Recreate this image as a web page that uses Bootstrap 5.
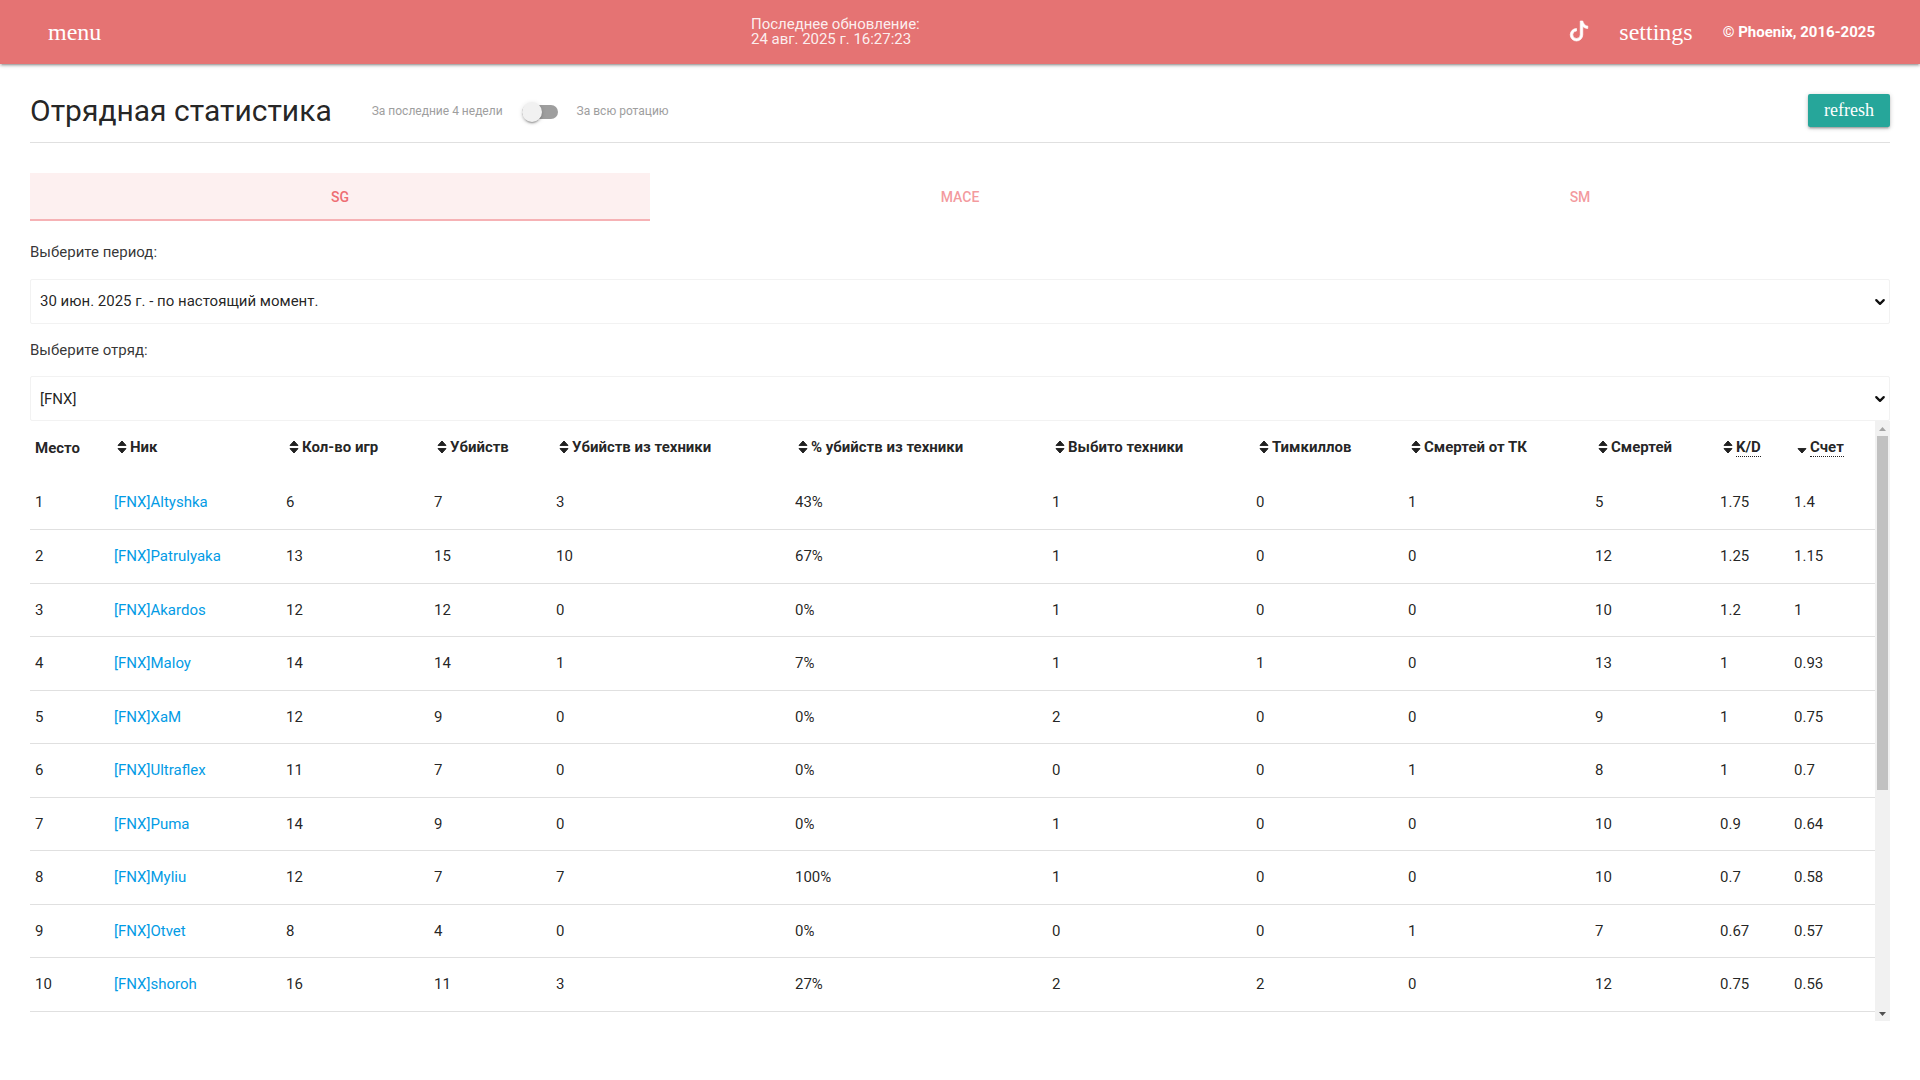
<!DOCTYPE html>
<html lang="ru">
<head>
<meta charset="utf-8">
<title>Отрядная статистика</title>
<link href="https://cdn.jsdelivr.net/npm/bootstrap@5.3.0/dist/css/bootstrap.min.css" rel="stylesheet">
<style>
html,body{height:100%;}
body{font-family:Roboto,"Liberation Sans",sans-serif;font-size:15px;line-height:1.5;color:rgba(0,0,0,.87);background:#fff;overflow:hidden;}
.top-bar{background:#e57373;height:64px;padding:0 45px 0 48px;color:#fff;box-shadow:0 2px 2px 0 rgba(0,0,0,.14),0 3px 1px -2px rgba(0,0,0,.12),0 1px 5px 0 rgba(0,0,0,.2);}
.ico-word{font-family:"Liberation Serif",serif;font-size:24px;line-height:24px;color:#fff;}
.menu-word{position:relative;top:1px;}
.bar-left{flex:0 0 703px;}
.updated{font-size:15px;line-height:15px;color:rgba(255,255,255,.9);margin-top:-1px;letter-spacing:-.02px;}
.bar-right{margin-left:auto;}
.tiktok-ico{width:20px;height:20px;margin-right:30px;margin-top:-2px;display:block;fill:#fff;stroke:#fff;stroke-width:.55;overflow:visible;}
.copy-text{font-size:15px;font-weight:700;color:#fff;margin-left:30px;}
.main-area{padding:0 30px;}
.head-row{height:79px;border-bottom:1px solid #e0e0e0;padding-bottom:5px;}
.head-title{font-size:30px;line-height:36px;font-weight:400;margin:0 40px 0 0;}
.switch-text{font-size:12px;color:#9e9e9e;}
.lever{width:36px;height:14px;background:rgba(0,0,0,.38);border-radius:15px;margin:1px 19px 0 19px;display:flex;align-items:center;}
.lever-knob{width:20px;height:20px;border-radius:50%;background:#f1f1f1;box-shadow:0 3px 1px -2px rgba(0,0,0,.2),0 2px 2px 0 rgba(0,0,0,.14),0 1px 5px 0 rgba(0,0,0,.12);flex:none;}
.refresh-btn{margin-left:auto;background:#26a69a;color:#fff;border:0;border-radius:2px;height:33px;padding:0 16px;font-family:"Liberation Serif",serif;font-size:18px;line-height:33px;box-shadow:0 2px 2px 0 rgba(0,0,0,.14),0 3px 1px -2px rgba(0,0,0,.12),0 1px 5px 0 rgba(0,0,0,.2);margin-top:-1px;}
.tab-row{margin-top:30px;height:48px;}
.tab-item{flex:1 1 0;text-align:center;line-height:48px;font-size:14px;font-weight:500;color:rgba(238,110,115,.7);height:48px;}
.tab-item.on{color:#ee6e73;background:rgba(246,178,181,.2);border-bottom:2px solid #f6b2b5;}
.field-label{font-size:15px;line-height:22px;color:rgba(0,0,0,.8);}
.label-one{margin-top:20px;}
.label-two{margin-top:15px;}
.pick{height:45px;margin-top:16px;border:1px solid #f2f2f2;border-radius:2px;padding:0 9px;font-size:15px;color:rgba(0,0,0,.87);font-family:Roboto,"Liberation Sans",sans-serif;background-color:#fff;background-position:right 3px center;background-size:12px 12px;box-shadow:none;background-image:url("data:image/svg+xml,%3csvg xmlns='http://www.w3.org/2000/svg' viewBox='0 0 16 16'%3e%3cpath fill='none' stroke='%23111' stroke-linecap='round' stroke-linejoin='round' stroke-width='3' d='m3 5.5 5 5 5-5'/%3e%3c/svg%3e");}
.label-two + .pick{margin-top:15px;padding-top:1px;}
.table-zone{height:600px;}
.table-clip{flex:1 1 auto;overflow:hidden;min-width:0;}
.stats-grid{table-layout:fixed;width:1845px;margin:0;--bs-table-border-color:#e0e0e0;--bs-table-color:rgba(0,0,0,.87);color:rgba(0,0,0,.87);}
.stats-grid th{font-weight:700;font-size:15px;padding:15px 5px 17.5px 8px;border:0;line-height:22.5px;white-space:nowrap;height:55px;}
.stats-grid th.plain{padding-left:5px;padding-top:15.5px;padding-bottom:17px;}
.stats-grid td{padding:15px 5px;line-height:22.5px;font-size:15px;border-bottom:1px solid #e0e0e0;height:53.5px;}
.stats-grid a{color:#039be5;text-decoration:none;}
.sort-ico{width:10px;height:14px;margin-right:3px;vertical-align:-2px;fill:#212121;stroke:#212121;stroke-width:1;stroke-linejoin:round;}
.hint-word{border-bottom:1px dotted #212121;}
.sbar{flex:0 0 15px;background:#f1f1f1;padding:0 2px;}
.sbar-arrow{height:15px;flex:none;display:block;width:11px;fill:#a3a3a3;}
.sbar-arrow.dark{fill:#505050;}
.sbar-thumb{background:#c1c1c1;height:354px;flex:none;}
</style>
</head>
<body>
<nav class="navbar top-bar d-flex align-items-center flex-nowrap">
  <div class="bar-left"><span class="ico-word menu-word">menu</span></div>
  <div class="updated">Последнее обновление:<br>24 авг. 2025 г. 16:27:23</div>
  <div class="bar-right d-flex align-items-center">
    <svg class="tiktok-ico" viewBox="0 0 16 16" aria-hidden="true"><path d="M9 0h1.98c.144.715.54 1.617 1.235 2.512C12.895 3.389 13.797 4 15 4v2c-1.753 0-3.07-.814-4-1.829V11a5 5 0 1 1-5-5v2a3 3 0 1 0 3 3V0Z"/></svg>
    <span class="ico-word">settings</span>
    <span class="copy-text">© Phoenix, 2016-2025</span>
  </div>
</nav>
<main class="main-area">
  <div class="head-row d-flex align-items-end">
    <div class="d-flex align-items-center w-100 pb-2">
      <h4 class="head-title">Отрядная статистика</h4>
      <span class="switch-text">За последние 4 недели</span>
      <span class="lever"><span class="lever-knob"></span></span>
      <span class="switch-text">За всю ротацию</span>
      <button class="btn refresh-btn" type="button">refresh</button>
    </div>
  </div>
  <div class="tab-row d-flex">
    <div class="tab-item on">SG</div>
    <div class="tab-item">MACE</div>
    <div class="tab-item">SM</div>
  </div>
  <div class="field-label label-one">Выберите период:</div>
  <select class="form-select pick"><option>30 июн. 2025 г. - по настоящий момент.</option></select>
  <div class="field-label label-two">Выберите отряд:</div>
  <select class="form-select pick"><option>[FNX]</option></select>
  <div class="table-zone d-flex">
    <div class="table-clip">
      <table class="table stats-grid" id="grid">
        <colgroup>
          <col style="width:79px"><col style="width:172px"><col style="width:148px"><col style="width:122px"><col style="width:239px"><col style="width:257px"><col style="width:204px"><col style="width:152px"><col style="width:187px"><col style="width:125px"><col style="width:74px"><col style="width:86px">
        </colgroup>
        <thead>
          <tr>
            <th class="plain">Место</th>
            <th><svg class="sort-ico" viewBox="0 0 10 14"><path d="M5 1 9 5.400H1zM5 13 1 8.600h8z"/></svg>Ник</th>
            <th><svg class="sort-ico" viewBox="0 0 10 14"><path d="M5 1 9 5.400H1zM5 13 1 8.600h8z"/></svg>Кол-во игр</th>
            <th><svg class="sort-ico" viewBox="0 0 10 14"><path d="M5 1 9 5.400H1zM5 13 1 8.600h8z"/></svg>Убийств</th>
            <th><svg class="sort-ico" viewBox="0 0 10 14"><path d="M5 1 9 5.400H1zM5 13 1 8.600h8z"/></svg>Убийств из техники</th>
            <th><svg class="sort-ico" viewBox="0 0 10 14"><path d="M5 1 9 5.400H1zM5 13 1 8.600h8z"/></svg>% убийств из техники</th>
            <th><svg class="sort-ico" viewBox="0 0 10 14"><path d="M5 1 9 5.400H1zM5 13 1 8.600h8z"/></svg>Выбито техники</th>
            <th><svg class="sort-ico" viewBox="0 0 10 14"><path d="M5 1 9 5.400H1zM5 13 1 8.600h8z"/></svg>Тимкиллов</th>
            <th><svg class="sort-ico" viewBox="0 0 10 14"><path d="M5 1 9 5.400H1zM5 13 1 8.600h8z"/></svg>Смертей от ТК</th>
            <th><svg class="sort-ico" viewBox="0 0 10 14"><path d="M5 1 9 5.400H1zM5 13 1 8.600h8z"/></svg>Смертей</th>
            <th><svg class="sort-ico" viewBox="0 0 10 14"><path d="M5 1 9 5.400H1zM5 13 1 8.600h8z"/></svg><span class="hint-word">K/D</span></th>
            <th><svg class="sort-ico" viewBox="0 0 10 14"><path d="M5 13 1 8.600h8z"/></svg><span class="hint-word">Счет</span></th>
          </tr>
        </thead>
        <tbody>
          <tr><td>1</td><td><a href="#">[FNX]Altyshka</a></td><td>6</td><td>7</td><td>3</td><td>43%</td><td>1</td><td>0</td><td>1</td><td>5</td><td>1.75</td><td>1.4</td></tr>
          <tr><td>2</td><td><a href="#">[FNX]Patrulyaka</a></td><td>13</td><td>15</td><td>10</td><td>67%</td><td>1</td><td>0</td><td>0</td><td>12</td><td>1.25</td><td>1.15</td></tr>
          <tr><td>3</td><td><a href="#">[FNX]Akardos</a></td><td>12</td><td>12</td><td>0</td><td>0%</td><td>1</td><td>0</td><td>0</td><td>10</td><td>1.2</td><td>1</td></tr>
          <tr><td>4</td><td><a href="#">[FNX]Maloy</a></td><td>14</td><td>14</td><td>1</td><td>7%</td><td>1</td><td>1</td><td>0</td><td>13</td><td>1</td><td>0.93</td></tr>
          <tr><td>5</td><td><a href="#">[FNX]XaM</a></td><td>12</td><td>9</td><td>0</td><td>0%</td><td>2</td><td>0</td><td>0</td><td>9</td><td>1</td><td>0.75</td></tr>
          <tr><td>6</td><td><a href="#">[FNX]Ultraflex</a></td><td>11</td><td>7</td><td>0</td><td>0%</td><td>0</td><td>0</td><td>1</td><td>8</td><td>1</td><td>0.7</td></tr>
          <tr><td>7</td><td><a href="#">[FNX]Puma</a></td><td>14</td><td>9</td><td>0</td><td>0%</td><td>1</td><td>0</td><td>0</td><td>10</td><td>0.9</td><td>0.64</td></tr>
          <tr><td>8</td><td><a href="#">[FNX]Myliu</a></td><td>12</td><td>7</td><td>7</td><td>100%</td><td>1</td><td>0</td><td>0</td><td>10</td><td>0.7</td><td>0.58</td></tr>
          <tr><td>9</td><td><a href="#">[FNX]Otvet</a></td><td>8</td><td>4</td><td>0</td><td>0%</td><td>0</td><td>0</td><td>1</td><td>7</td><td>0.67</td><td>0.57</td></tr>
          <tr><td>10</td><td><a href="#">[FNX]shoroh</a></td><td>16</td><td>11</td><td>3</td><td>27%</td><td>2</td><td>2</td><td>0</td><td>12</td><td>0.75</td><td>0.56</td></tr>
        </tbody>
      </table>
    </div>
    <div class="sbar d-flex flex-column">
      <svg class="sbar-arrow" viewBox="0 0 11 15"><path d="M5.500 6 9 10H2z"/></svg>
      <div class="sbar-thumb"></div>
      <svg class="sbar-arrow dark mt-auto" viewBox="0 0 11 15"><path d="M5.500 10 9 6H2z"/></svg>
    </div>
  </div>
</main>
<script src="https://cdn.jsdelivr.net/npm/bootstrap@5.3.0/dist/js/bootstrap.bundle.min.js"></script>
</body>
</html>
